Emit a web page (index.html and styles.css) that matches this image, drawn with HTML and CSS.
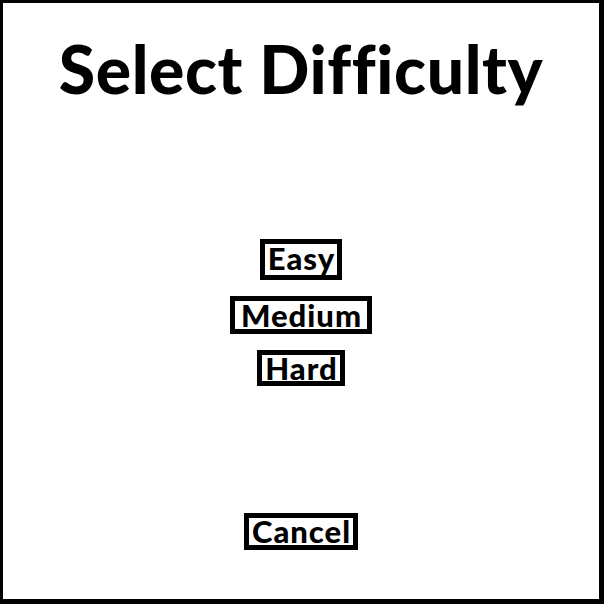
FILE: index.html
```html
<!DOCTYPE html>
<html lang="en">
<head>
    <meta charset="UTF-8">
    <title>Select Difficulty</title>
    <link rel="stylesheet" href="styles.css">
</head>
<body>
    <div class="tela">
        <h1 class="titulo">Select Difficulty</h1>
        <div class="opcoes">
            <button class="botao botao-easy">Easy</button>
            <button class="botao botao-medium">Medium</button>
            <button class="botao botao-hard">Hard</button>
        </div>
        <button class="botao botao-cancelar">Cancel</button>
    </div>
</body>
</html>
```

FILE: styles.css
```css
body {
    margin: 0;
    font-family: Lato, "Open Sans", sans-serif;
    background: #fff;
}
.tela {
    width: 604px;
    height: 604px;
    box-sizing: border-box;
    border-style: solid;
    border-color: #000;
    border-width: 3px 5px 5px 3px;
    display: flex;
    flex-direction: column;
    align-items: center;
}
.titulo {
    margin: 26px 0 0;
    font-size: 66px;
    font-weight: 900;
    letter-spacing: 0.6px;
    line-height: 80px;
    color: #000;
}
.opcoes {
    margin-top: 130px;
    display: flex;
    flex-direction: column;
    align-items: center;
    gap: 16px;
}
.botao {
    font-family: inherit;
    font-size: 31px;
    font-weight: 900;
    letter-spacing: 1px;
    line-height: 28px;
    color: #000;
    background: #fff;
    border: 5px solid #000;
    padding: 0 2px 0 3px;
    cursor: pointer;
}
.botao-easy {
    padding-bottom: 3px;
}
.botao-medium {
    padding: 0 5px 0 6px;
}
.botao-hard {
    line-height: 26px;
}
.botao-cancelar {
    margin-top: 127px;
    line-height: 27px;
}
```
